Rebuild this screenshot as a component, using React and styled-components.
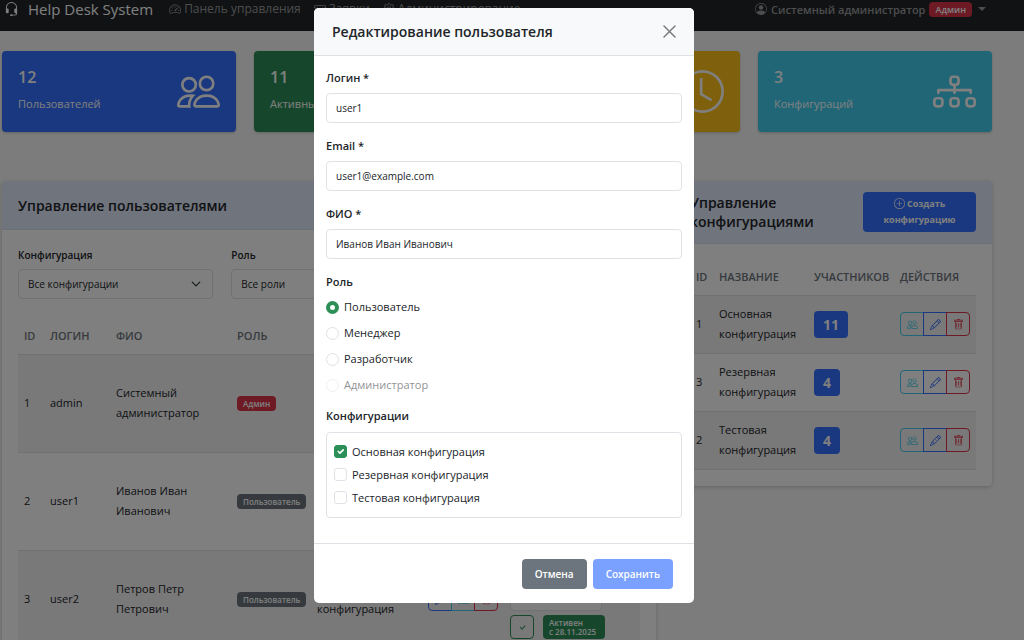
import React from "react";
import styled, { createGlobalStyle, css } from "styled-components";
import {
  BsHeadset,
  BsSpeedometer2,
  BsTicketPerforated,
  BsGear,
  BsPersonCircle,
  BsPeople,
  BsPersonCheck,
  BsClock,
  BsDiagram3,
  BsPlusCircle,
  BsPencil,
  BsTrash,
  BsCheck,
} from "react-icons/bs";

const colors = {
  primary: "#3470ff",
  success: "#2d8f58",
  warning: "#ffc119",
  info: "#40cdee",
  danger: "#dc3548",
  secondary: "#6c757d",
  border: "#dee2e6",
  text: "#212529",
};

const GlobalStyle = createGlobalStyle`
  *, *::before, *::after {
    box-sizing: border-box;
  }
  html, body {
    height: 100%;
  }
  body {
    margin: 0;
    overflow: hidden;
    color: ${colors.text};
    background: #f8f9fa;
    font-family: "Open Sans", "Noto Sans", sans-serif;
    font-size: 11px;
    line-height: 18px;
  }
  button, input, select {
    font-family: inherit;
  }
`;

const Navbar = styled.nav`
  display: flex;
  align-items: center;
  gap: 13px;
  padding: 0 38px 13px 4px;
  height: 31px;
  color: #9a9b9c;
  background: #212529;
`;
const Brand = styled.a`
  display: flex;
  align-items: center;
  gap: 9px;
  margin-right: 3px;
  color: #fff;
  font-size: 15px;
  font-weight: 500;
  text-decoration: none;
  white-space: nowrap;
`;
const NavLink = styled.a`
  display: flex;
  align-items: center;
  gap: 3px;
  color: inherit;
  font-size: 12px;
  font-weight: 500;
  text-decoration: none;
  white-space: nowrap;
`;
const UserMenu = styled.button`
  display: flex;
  align-items: center;
  gap: 4px;
  margin-left: auto;
  padding: 0;
  border: 0;
  color: inherit;
  background: none;
  font-size: 11px;
  font-weight: 600;

  svg {
    width: 12px;
    height: 12px;
  }
`;
const Caret = styled.span`
  margin-left: 2px;
  border: 4px solid transparent;
  border-top-color: currentColor;
  border-bottom: 0;
`;
const Badge = styled.span`
  display: inline-block;
  padding: ${(p) => (p.$large ? "4px 9px" : p.$medium ? "3px 6px" : "3px 6px")};
  border-radius: 4px;
  color: #fff;
  background: ${(p) => colors[p.$color]};
  font-size: ${(p) => (p.$large ? 14 : p.$medium ? 9 : 8)}px;
  line-height: ${(p) => (p.$large ? 19 : 9)}px;
  font-weight: ${(p) => (p.$large ? 700 : 600)};
  text-align: left;
`;

const Main = styled.main`
  display: grid;
  grid-template-columns: repeat(12, 1fr);
  align-items: start;
  gap: 49px 18px;
  padding: 20px 32px 0 2px;
`;
const StatCard = styled.section`
  grid-column: span 3;
  display: flex;
  align-items: center;
  justify-content: space-between;
  height: 81px;
  padding: 0 16px 0;
  border-radius: 4px;
  color: #fff;
  background: ${(p) => colors[p.$color]};
  box-shadow: 0 1px 3px rgba(0, 0, 0, 0.2);
`;
const StatValue = styled.div`
  margin-bottom: 9px;
  font-size: 16px;
  font-weight: 600;
`;
const StatText = styled.div`
  padding-bottom: 2px;
`;

const Panel = styled.section`
  grid-column: span ${(p) => p.$span};
  border-radius: 4px;
  background: #fff;
  box-shadow: 0 1px 4px rgba(0, 0, 0, 0.2);
`;
const PanelHeader = styled.header`
  display: flex;
  align-items: center;
  justify-content: space-between;
  gap: 16px;
  min-height: 49px;
  padding: 11px 16px;
  border-bottom: 1px solid #d6deee;
  border-radius: 4px 4px 0 0;
  background: #e0e8fa;
`;
const PanelTitle = styled.h2`
  margin: 0;
  font-size: 14px;
  line-height: 19px;
  font-weight: 600;
`;
const PanelBody = styled.div`
  padding: 16px;
`;
const CreateButton = styled.button`
  width: 113px;
  flex-shrink: 0;
  padding: 4px 8px;
  border: 0;
  border-radius: 4px;
  color: #fff;
  background: ${colors.primary};
  font-size: 9px;
  line-height: 16px;
  font-weight: 700;

  svg {
    width: 11px;
    height: 11px;
    vertical-align: -2px;
  }
`;

const FilterRow = styled.div`
  display: grid;
  grid-template-columns: repeat(3, 1fr);
  gap: 18px;
  margin-bottom: 20px;
`;
const FilterField = styled.div`
  display: flex;
  flex-direction: column;
  gap: 5px;
`;
const FilterLabel = styled.label`
  font-size: 10px;
  font-weight: 600;
`;
const Select = styled.select`
  height: 30px;
  padding: 0 28px 0 9px;
  border: 1px solid ${colors.border};
  border-radius: 4px;
  appearance: none;
  color: ${colors.text};
  background: #fff
    url("data:image/svg+xml,%3csvg xmlns='http://www.w3.org/2000/svg' viewBox='0 0 16 16'%3e%3cpath fill='none' stroke='%23343a40' stroke-linecap='round' stroke-linejoin='round' stroke-width='2' d='m2 5 6 6 6-6'/%3e%3c/svg%3e")
    no-repeat right 11px center / 10px 10px;
  font-size: 10px;
`;

const Table = styled.table`
  width: 100%;
  border-collapse: collapse;
  table-layout: fixed;
`;
const Th = styled.th`
  width: ${(p) => (p.$width ? `${p.$width}px` : "auto")};
  height: 35px;
  padding: 0 6px;
  border-bottom: 1px solid ${colors.border};
  color: ${colors.secondary};
  font-size: 11px;
  font-weight: 600;
  text-align: left;
  text-transform: uppercase;
`;
const Row = styled.tr`
  height: ${(p) => p.$height}px;
  border-bottom: 1px solid ${colors.border};

  &:nth-child(odd) {
    background: #f2f2f2;
  }
`;
const Td = styled.td`
  padding: 0 6px;
  font-size: 11px;
  line-height: 20px;
`;

const ButtonGroup = styled.div`
  display: flex;
`;
const iconButton = css`
  display: flex;
  align-items: center;
  justify-content: center;
  width: 24px;
  height: 24px;
  padding: 0;
  border: 1px solid ${(p) => colors[p.$color]};
  color: ${(p) => colors[p.$color]};
  background: none;
  font-size: 11px;
`;
const GroupButton = styled.button`
  ${iconButton}

  &:first-child {
    border-radius: 4px 0 0 4px;
  }
  &:last-child {
    border-radius: 0 4px 4px 0;
  }
  & + & {
    margin-left: -1px;
  }
`;
const CheckButton = styled.button`
  ${iconButton}
  border-radius: 4px;
`;
const StatusStack = styled.div`
  display: flex;
  flex-direction: column;
  gap: 4px;
  width: 95px;
`;
const StatusLine = styled.div`
  display: flex;
  gap: 9px;

  ${Badge} {
    flex: 1;
    white-space: nowrap;
  }
`;
const DateInput = styled.input`
  width: 92px;
  height: 24px;
  border: 1px solid ${colors.border};
  border-radius: 4px;
  background: #fff;
  font-size: 9px;
`;

const Backdrop = styled.div`
  position: fixed;
  inset: 0;
  padding: 8px 16px 8px 0;
  background: rgba(0, 0, 0, 0.5);
`;
const Dialog = styled.form`
  max-width: 380px;
  margin: 0 auto;
  border-radius: 5px;
  overflow: hidden;
  color: ${colors.text};
  background: #fff;
`;
const DialogHeader = styled.header`
  display: flex;
  align-items: center;
  justify-content: space-between;
  height: 48px;
  padding: 0 18px;
  border-bottom: 1px solid ${colors.border};
  background: #f8f9fa;
`;
const DialogTitle = styled.h1`
  margin: 0;
  font-size: 14px;
  font-weight: 600;
`;
const CloseButton = styled.button`
  display: flex;
  padding: 0;
  border: 0;
  color: #7c7d7e;
  background: none;
`;
const DialogBody = styled.div`
  padding: 13px 12px 16px;
`;
const Field = styled.div`
  display: flex;
  flex-direction: column;
  gap: 6px;
  margin-bottom: 14px;
`;
const Label = styled.label`
  font-size: 11px;
  font-weight: 600;
`;
const TextInput = styled.input`
  height: 30px;
  padding: 0 9px;
  border: 1px solid ${colors.border};
  border-radius: 4px;
  color: ${colors.text};
  font-size: 10px;
`;
const Group = styled.fieldset`
  margin: 0 0 9px;
  padding: 0;
  border: 0;
`;
const Legend = styled.legend`
  margin-bottom: 3px;
  padding: 0;
  font-size: 11px;
  font-weight: 600;
`;
const Option = styled.label`
  display: flex;
  align-items: center;
  gap: 5px;
  height: ${(p) => p.$height}px;
  opacity: ${(p) => (p.$disabled ? 0.5 : 1)};
`;
const optionMark = css`
  flex-shrink: 0;
  width: 13px;
  height: 13px;
  margin: 0;
  border: 1px solid ${colors.border};
  appearance: none;
  background: #fff;
`;
const Radio = styled.input`
  ${optionMark}
  border-radius: 50%;

  &:checked {
    border: 4px solid ${colors.success};
  }
`;
const Checkbox = styled.input`
  ${optionMark}
  border-radius: 3px;

  &:checked {
    border-color: ${colors.success};
    background: ${colors.success}
      url("data:image/svg+xml,%3csvg xmlns='http://www.w3.org/2000/svg' viewBox='0 0 20 20'%3e%3cpath fill='none' stroke='%23fff' stroke-linecap='round' stroke-linejoin='round' stroke-width='3' d='m6 10 3 3 6-6'/%3e%3c/svg%3e")
      center / contain;
  }
`;
const CheckList = styled.div`
  height: 86px;
  margin-top: 4px;
  padding: 7px;
  border: 1px solid ${colors.border};
  border-radius: 4px;
`;
const DialogFooter = styled.footer`
  display: flex;
  justify-content: flex-end;
  gap: 6px;
  padding: 15px 21px 14px;
  border-top: 1px solid ${colors.border};
`;
const ActionButton = styled.button`
  height: 30px;
  padding: 0 13px;
  border: 0;
  border-radius: 4px;
  color: #fff;
  background: ${(p) => colors[p.$color]};
  font-size: 10px;
  font-weight: 600;

  &:disabled {
    opacity: 0.65;
  }
`;

const STATS = [
  { value: 12, label: "Пользователей", color: "primary", Icon: BsPeople },
  { value: 11, label: "Активных", color: "success", Icon: BsPersonCheck },
  { value: 1, label: "Ожидают", color: "warning", Icon: BsClock },
  { value: 3, label: "Конфигураций", color: "info", Icon: BsDiagram3 },
];

const USERS = [
  {
    id: 1,
    login: "admin",
    name: "Системный администратор",
    role: "Админ",
    color: "danger",
  },
  {
    id: 2,
    login: "user1",
    name: "Иванов Иван Иванович",
    role: "Пользователь",
    color: "secondary",
  },
  {
    id: 3,
    login: "user2",
    name: "Петров Петр Петрович",
    role: "Пользователь",
    color: "secondary",
  },
];

const CONFIGS = [
  { id: 1, name: "Основная конфигурация", members: 11 },
  { id: 3, name: "Резервная конфигурация", members: 4 },
  { id: 2, name: "Тестовая конфигурация", members: 4 },
];

const ROLES = ["Пользователь", "Менеджер", "Разработчик", "Администратор"];

const UsersPanel = () => (
  <Panel $span={8}>
    <PanelHeader>
      <PanelTitle>Управление пользователями</PanelTitle>
    </PanelHeader>
    <PanelBody>
      <FilterRow>
        <FilterField>
          <FilterLabel htmlFor="filter-config">Конфигурация</FilterLabel>
          <Select id="filter-config">
            <option>Все конфигурации</option>
          </Select>
        </FilterField>
        <FilterField>
          <FilterLabel htmlFor="filter-role">Роль</FilterLabel>
          <Select id="filter-role">
            <option>Все роли</option>
          </Select>
        </FilterField>
      </FilterRow>
      <Table>
        <thead>
          <tr>
            <Th $width={26}>ID</Th>
            <Th $width={66}>Логин</Th>
            <Th $width={121}>ФИО</Th>
            <Th $width={80}>Роль</Th>
            <Th $width={111}>Конфигурации</Th>
            <Th $width={82}>Действия</Th>
            <Th>Статус</Th>
          </tr>
        </thead>
        <tbody>
          {USERS.map((user) => (
            <Row key={user.id} $height={98}>
              <Td>{user.id}</Td>
              <Td>{user.login}</Td>
              <Td>{user.name}</Td>
              <Td>
                <Badge $color={user.color}>{user.role}</Badge>
              </Td>
              <Td>Основная конфигурация</Td>
              <Td>
                <ButtonGroup>
                  <GroupButton $color="primary" aria-label="Изменить">
                    <BsPencil />
                  </GroupButton>
                  <GroupButton $color="info" aria-label="Конфигурации">
                    <BsPeople />
                  </GroupButton>
                  <GroupButton $color="danger" aria-label="Удалить">
                    <BsTrash />
                  </GroupButton>
                </ButtonGroup>
              </Td>
              <Td>
                <StatusStack>
                  <DateInput aria-label="Дата начала" />
                  <DateInput aria-label="Дата окончания" />
                  <StatusLine>
                    <CheckButton $color="success" aria-label="Применить">
                      <BsCheck />
                    </CheckButton>
                    <Badge $color="success">
                      Активен
                      <br />с 28.11.2025
                    </Badge>
                  </StatusLine>
                </StatusStack>
              </Td>
            </Row>
          ))}
        </tbody>
      </Table>
    </PanelBody>
  </Panel>
);

const ConfigsPanel = () => (
  <Panel $span={4}>
    <PanelHeader>
      <PanelTitle>Управление конфигурациями</PanelTitle>
      <CreateButton>
        <BsPlusCircle /> Создать конфигурацию
      </CreateButton>
    </PanelHeader>
    <PanelBody>
      <Table>
        <thead>
          <tr>
            <Th $width={23}>ID</Th>
            <Th $width={95}>Название</Th>
            <Th $width={86}>Участников</Th>
            <Th>Действия</Th>
          </tr>
        </thead>
        <tbody>
          {CONFIGS.map((config) => (
            <Row key={config.id} $height={58}>
              <Td>{config.id}</Td>
              <Td>{config.name}</Td>
              <Td>
                <Badge $color="primary" $large>
                  {config.members}
                </Badge>
              </Td>
              <Td>
                <ButtonGroup>
                  <GroupButton $color="info" aria-label="Участники">
                    <BsPeople />
                  </GroupButton>
                  <GroupButton $color="primary" aria-label="Изменить">
                    <BsPencil />
                  </GroupButton>
                  <GroupButton $color="danger" aria-label="Удалить">
                    <BsTrash />
                  </GroupButton>
                </ButtonGroup>
              </Td>
            </Row>
          ))}
        </tbody>
      </Table>
    </PanelBody>
  </Panel>
);

const EditUserDialog = () => {
  const [role, setRole] = React.useState(ROLES[0]);
  const [selected, setSelected] = React.useState([1]);

  const toggleConfig = (id) => {
    setSelected(
      selected.includes(id)
        ? selected.filter((item) => item !== id)
        : [...selected, id]
    );
  };

  return (
    <Backdrop>
      <Dialog role="dialog" aria-labelledby="dialog-title">
        <DialogHeader>
          <DialogTitle id="dialog-title">
            Редактирование пользователя
          </DialogTitle>
          <CloseButton type="button" aria-label="Закрыть">
            <svg width="13" height="13" viewBox="0 0 13 13">
              <path
                d="M1 1l11 11M12 1L1 12"
                stroke="currentColor"
                strokeWidth="1.5"
                strokeLinecap="round"
              />
            </svg>
          </CloseButton>
        </DialogHeader>
        <DialogBody>
          <Field>
            <Label htmlFor="login">Логин *</Label>
            <TextInput id="login" defaultValue="user1" />
          </Field>
          <Field>
            <Label htmlFor="email">Email *</Label>
            <TextInput id="email" defaultValue="user1@example.com" />
          </Field>
          <Field>
            <Label htmlFor="name">ФИО *</Label>
            <TextInput id="name" defaultValue="Иванов Иван Иванович" />
          </Field>
          <Group>
            <Legend>Роль</Legend>
            {ROLES.map((item) => (
              <Option
                key={item}
                $height={26}
                $disabled={item === "Администратор"}
              >
                <Radio
                  type="radio"
                  name="role"
                  checked={role === item}
                  disabled={item === "Администратор"}
                  onChange={() => setRole(item)}
                />
                {item}
              </Option>
            ))}
          </Group>
          <Group>
            <Legend>Конфигурации</Legend>
            <CheckList>
              {CONFIGS.map((config) => (
                <Option key={config.id} $height={23}>
                  <Checkbox
                    type="checkbox"
                    checked={selected.includes(config.id)}
                    onChange={() => toggleConfig(config.id)}
                  />
                  {config.name}
                </Option>
              ))}
            </CheckList>
          </Group>
        </DialogBody>
        <DialogFooter>
          <ActionButton type="button" $color="secondary">
            Отмена
          </ActionButton>
          <ActionButton type="submit" $color="primary" disabled>
            Сохранить
          </ActionButton>
        </DialogFooter>
      </Dialog>
    </Backdrop>
  );
};

const App = () => (
  <>
    <GlobalStyle />
    <Navbar>
      <Brand href="#">
        <BsHeadset />
        Help Desk System
      </Brand>
      <NavLink href="#dashboard">
        <BsSpeedometer2 />
        Панель управления
      </NavLink>
      <NavLink href="#tickets">
        <BsTicketPerforated />
        Заявки
      </NavLink>
      <NavLink href="#admin">
        <BsGear />
        Администрирование
      </NavLink>
      <UserMenu>
        <BsPersonCircle />
        Системный администратор
        <Badge $color="danger" $medium>
          Админ
        </Badge>
        <Caret />
      </UserMenu>
    </Navbar>
    <Main>
      {STATS.map(({ value, label, color, Icon }) => (
        <StatCard key={label} $color={color}>
          <StatText>
            <StatValue>{value}</StatValue>
            <div>{label}</div>
          </StatText>
          <Icon size={43} />
        </StatCard>
      ))}
      <UsersPanel />
      <ConfigsPanel />
    </Main>
    <EditUserDialog />
  </>
);

export default App;
